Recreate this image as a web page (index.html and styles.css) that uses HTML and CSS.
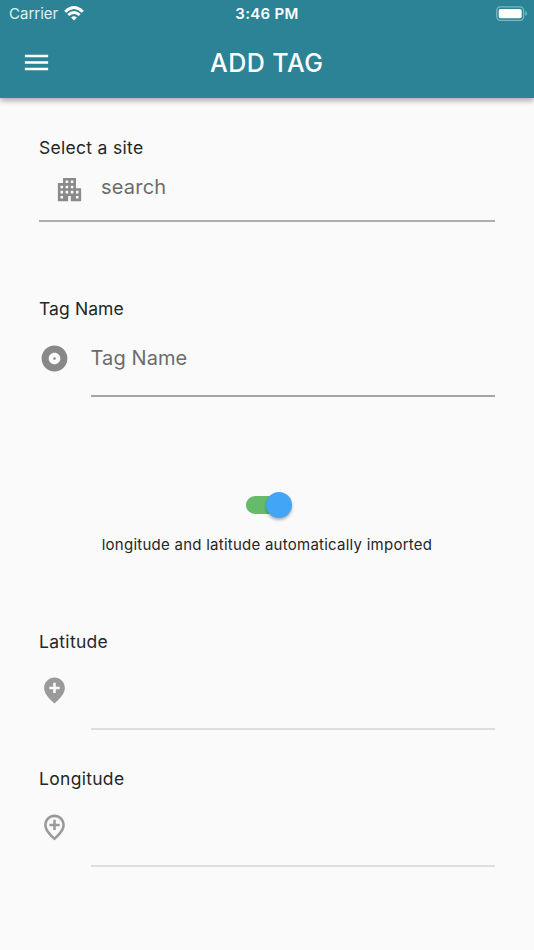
FILE: index.html
```html
<!DOCTYPE html>
<html lang="en">
<head>
<meta charset="utf-8">
<title>Add Tag</title>
<link rel="stylesheet" href="styles.css">
</head>
<body>
<header class="top">
  <div class="status">
    <div class="carrier"><span>Carrier</span>
      <svg class="wifi" viewBox="0 0 20 15"><path d="M10 14.5 7.1 11.5Q10 9.1 12.9 11.5Z"/><path class="arc" d="M1.2 5.7Q10-2.6 18.8 5.7M4.3 9Q10 3.8 15.7 9"/></svg>
    </div>
    <div class="clock">3:46 PM</div>
    <svg class="battery" viewBox="0 0 32 16"><rect class="shell" x=".7" y=".9" width="27" height="13.4" rx="3.8"/><rect x="2.7" y="2.9" width="23" height="9.4" rx="1.8"/><path class="cap" d="M29.3 5.1Q31 5.8 31 7.6T29.3 10.1Z"/></svg>
  </div>
  <div class="bar">
    <svg class="icon menu" viewBox="0 0 24 24"><path d="M3 18h18v-2H3v2zm0-5h18v-2H3v2zm0-7v2h18V6H3z"/></svg>
    <h1>ADD TAG</h1>
  </div>
</header>
<main>
  <section class="site">
    <label>Select a site</label>
    <div class="search">
      <svg class="icon" viewBox="0 0 24 24"><path d="M17 11V3H7v4H3v14h8v-4h2v4h8V11h-4zM7 19H5v-2h2v2zm0-4H5v-2h2v2zm0-4H5V9h2v2zm4 4H9v-2h2v2zm0-4H9V9h2v2zm0-4H9V5h2v2zm4 8h-2v-2h2v2zm0-4h-2V9h2v2zm0-4h-2V5h2v2zm4 12h-2v-2h2v2zm0-4h-2v-2h2v2z"/></svg>
      <span class="hint search-hint">search</span>
    </div>
  </section>
  <section class="tag">
    <label>Tag Name</label>
    <div class="field">
      <svg class="icon" viewBox="0 0 24 24"><path d="M12 2C6.48 2 2 6.48 2 12s4.48 10 10 10 10-4.48 10-10S17.52 2 12 2zm0 14.5c-2.49 0-4.5-2.01-4.5-4.5S9.51 7.5 12 7.5s4.5 2.01 4.5 4.5-2.01 4.5-4.5 4.5zm0-5.5c-.55 0-1 .45-1 1s.45 1 1 1 1-.45 1-1-.45-1-1-1z"/></svg>
      <div class="input"><span class="hint tag-hint">Tag Name</span></div>
    </div>
  </section>
  <section class="auto">
    <div class="switch"><div class="thumb"></div></div>
    <p>longitude and latitude automatically imported</p>
  </section>
  <section class="coord latitude">
    <label>Latitude</label>
    <div class="field">
      <svg class="icon" viewBox="0 0 24 24"><path fill-rule="evenodd" d="M12 2c4.2 0 8 3.22 8 8.2 0 3.32-2.67 7.25-8 11.8-5.33-4.55-8-8.48-8-11.8C4 5.22 7.8 2 12 2zM11 6v3H8v2h3v3h2v-3h3V9h-3V6z"/></svg>
      <div class="input"></div>
    </div>
  </section>
  <section class="coord longitude">
    <label>Longitude</label>
    <div class="field">
      <svg class="icon" viewBox="0 0 24 24"><path fill-rule="evenodd" d="M12 2c4.2 0 8 3.22 8 8.2 0 3.32-2.67 7.25-8 11.8-5.33-4.55-8-8.48-8-11.8C4 5.22 7.8 2 12 2zM12 4c-3.35 0-6 2.57-6 6.2 0 2.34 1.95 5.44 6 9.14 4.05-3.7 6-6.79 6-9.14C18 6.57 15.35 4 12 4zM11 6v3H8v2h3v3h2v-3h3V9h-3V6z"/></svg>
      <div class="input"></div>
    </div>
  </section>
</main>
</body>
</html>
```
FILE: styles.css
```css
* { box-sizing: border-box; }
body {
  margin: 0;
  height: 950px;
  overflow: hidden;
  background: #fafafa;
  color: #262626;
  font-family: Inter, "Liberation Sans", sans-serif;
}
svg { display: block; flex: none; fill: currentColor; }
.icon { width: 31px; height: 31px; }
.top {
  height: 98px;
  background: #2b8395;
  color: #fff;
  box-shadow: 0 3px 5px rgba(0, 0, 0, .24), 0 1px 8px rgba(0, 0, 0, .12);
}
.status {
  height: 27px;
  display: grid;
  grid-template-columns: 1fr auto 1fr;
  align-items: center;
  padding: 0 9px;
  line-height: 28px;
}
.carrier { display: flex; align-items: center; gap: 6px; font-size: 15px; color: #e3eff1; }
.wifi { width: 20px; height: 15px; margin-top: -1px; color: #fff; }
.arc { fill: none; stroke: #fff; stroke-width: 2.9; }
.clock { font-size: 15px; font-weight: 600; letter-spacing: .3px; }
.battery { width: 32px; height: 16px; justify-self: end; margin-right: -2.6px; }
.shell { fill: none; stroke: #80b5bf; stroke-width: 1.3; }
.cap { fill: #80b5bf; }
.bar {
  height: 71px;
  display: grid;
  grid-template-columns: 52px 1fr 52px;
  align-items: center;
  padding: 0 21px 0 20.5px;
}
h1 { margin: 0; text-align: center; font-size: 25px; font-weight: 500; line-height: 32px; letter-spacing: .45px; }
main { padding: 38px 39px 0; }
label { display: block; height: 24px; line-height: 24px; font-size: 17.5px; letter-spacing: .3px; }
.search {
  height: 62px;
  display: flex;
  padding: 14px 0 0 15px;
  gap: 16px;
  color: #8a8a8a;
  border-bottom: 2px solid #adadad;
}
.search .icon { margin-top: .4px; }
.hint { font-size: 20px; line-height: 26px; color: #6c6c6c; letter-spacing: .2px; }
.tag { margin-top: 75px; }
.tag label { letter-spacing: .1px; }
.field { display: flex; gap: 20.5px; color: #888; }
.tag .icon { margin-top: 22px; }
.input { flex: 1; border-bottom: 2px solid #a6a6a6; }
.tag .input { height: 76px; padding-top: 24px; }
.tag-hint { letter-spacing: .1px; }
.auto { margin-top: 94px; height: 72px; padding-top: 5px; }
.switch {
  width: 43px;
  height: 18px;
  margin-left: 207px;
  border-radius: 9px;
  background: #66bb6a;
  display: flex;
  align-items: center;
}
.thumb {
  width: 26px;
  height: 26px;
  flex: none;
  margin-left: 20px;
  border-radius: 50%;
  background: #42a5f5;
  box-shadow: 0 2px 3px rgba(0, 0, 0, .3);
}
p { margin: 20px 0 0; text-align: center; font-size: 15px; line-height: 22px; letter-spacing: .25px; }
.coord .field { color: #9a9a9a; }
.coord .icon { margin-top: 21px; }
.coord .input { height: 76px; border-bottom: 2px solid #dedede; }
.latitude { margin-top: 67px; }
.longitude { margin-top: 37px; }
```
